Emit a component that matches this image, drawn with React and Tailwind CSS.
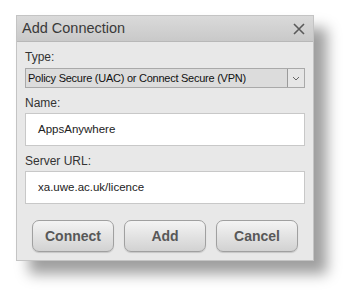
const SANS = '"Liberation Sans", Arial, sans-serif'

export default function App() {
  return (
    <div className="w-[350px] h-[296px] bg-white pl-[16px] pt-[15px]" style={{ fontFamily: SANS }}>
      <div className="w-[298px] h-[246px] flex flex-col bg-[#e8e8e8] border border-[#c4c4c4] shadow-[13px_13px_13px_rgba(0,0,0,0.38)]">
        {/* Title bar */}
        <div className="h-[26px] flex items-center justify-between pl-[5px] pr-[8px] bg-gradient-to-b from-[#dadada] to-[#c9c9c9] border-b border-[#b8b8b8]">
          <span className="text-[14.5px] text-[#3a3a3a] leading-none">Add Connection</span>
          <svg width="12" height="12" viewBox="0 0 12 12">
            <path d="M1 1L11 11M11 1L1 11" stroke="#5a5a5a" strokeWidth="1.6" />
          </svg>
        </div>

        <div className="flex flex-col px-[8px] pt-[9px]">
          <div className="text-[12px] text-[#333] leading-none">Type:</div>
          <div className="mt-[5px] h-[20px] flex border border-[#a9a9a9] bg-[#dcdcdc]">
            <div className="flex-1 flex items-center px-[2px] text-[11px] tracking-[-0.25px] text-[#111] leading-none border-r border-[#9a9a9a]">
              Policy Secure (UAC) or Connect Secure (VPN)
            </div>
            <div className="w-[16px] flex items-center justify-center bg-[#e6e6e6]">
              <svg width="8" height="5" viewBox="0 0 8 5">
                <path d="M1 1L4 4L7 1" fill="none" stroke="#666" strokeWidth="1" />
              </svg>
            </div>
          </div>

          <div className="mt-[9px] text-[12px] text-[#333] leading-none">Name:</div>
          <div className="mt-[4px] h-[33px] flex items-center px-[12px] bg-white border border-[#c8c8c8] text-[11.5px] text-[#222]">
            AppsAnywhere
          </div>

          <div className="mt-[9px] text-[12px] text-[#333] leading-none">Server URL:</div>
          <div className="mt-[4px] h-[33px] flex items-center px-[12px] bg-white border border-[#c8c8c8] text-[11.5px] text-[#222]">
            xa.uwe.ac.uk/licence
          </div>

          <div className="mt-[16px] flex gap-[10px] px-[7px]">
            {['Connect', 'Add', 'Cancel'].map((b) => (
              <button
                key={b}
                className="w-[84px] h-[32px] rounded-[7px] border border-[#a0a0a0] bg-gradient-to-b from-[#f4f4f4] to-[#d2d2d2] text-[14px] font-bold text-[#585858] shadow-[0_1px_1px_rgba(0,0,0,0.15)]"
              >
                {b}
              </button>
            ))}
          </div>
        </div>
      </div>
    </div>
  )
}
